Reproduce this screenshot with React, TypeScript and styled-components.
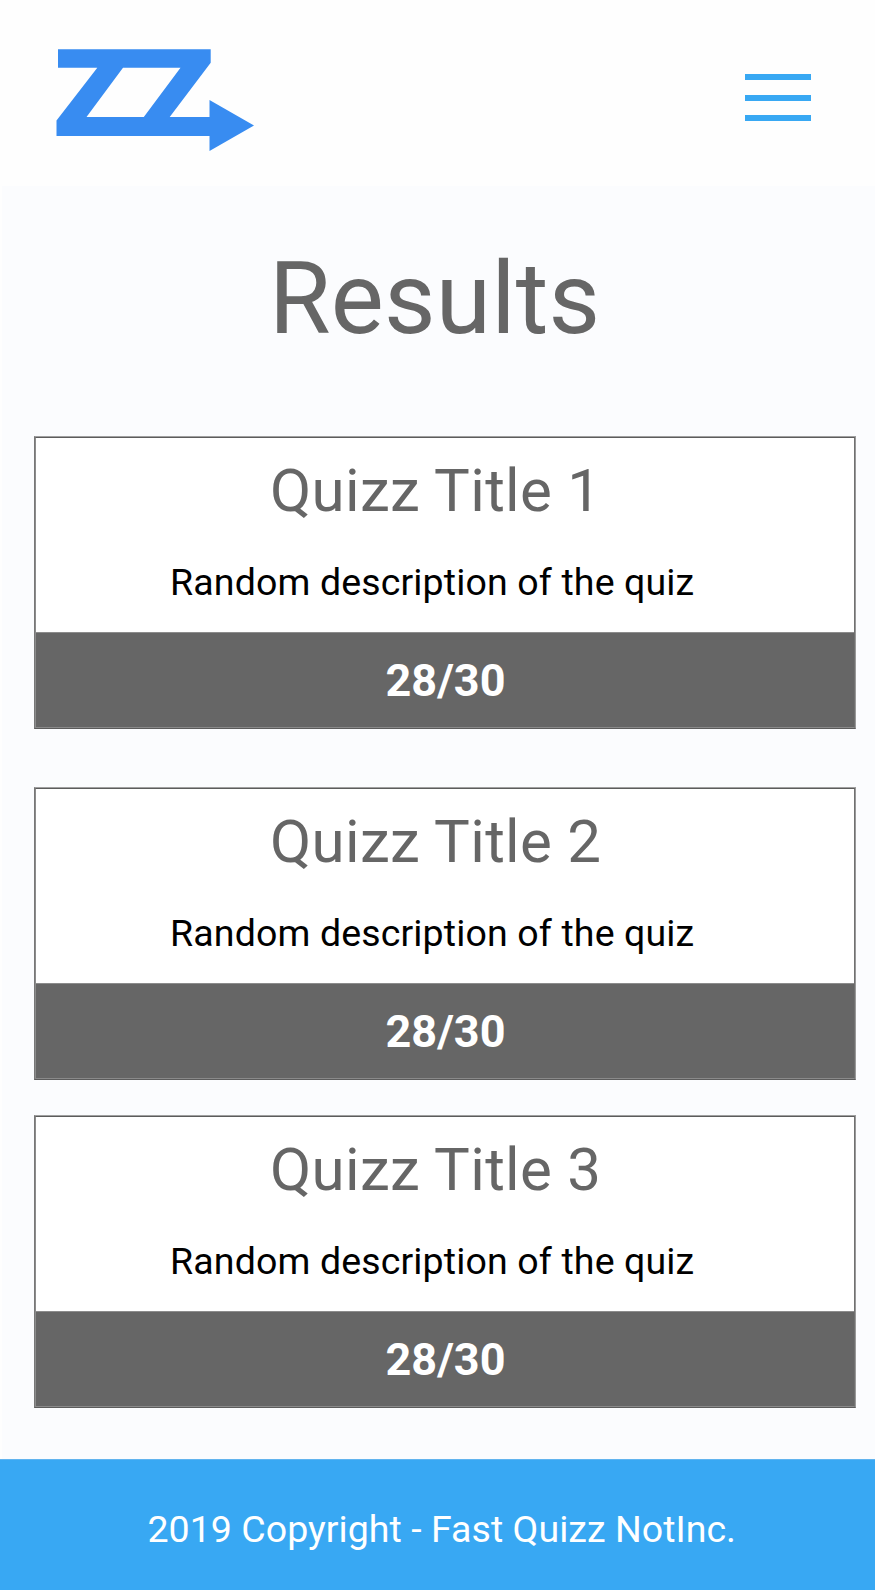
import React from "react";
import styled, { createGlobalStyle } from "styled-components";

const GlobalStyle = createGlobalStyle`
  * { box-sizing: border-box; }
  body { margin: 0; background: #fefefe; font-family: Roboto, sans-serif; }
  h1, h2, p { margin: 0; font-weight: 400; white-space: nowrap; }
`;

const Page = styled.div`
  width: 875px;
  height: 1590px;
  display: flex;
  flex-direction: column;
`;

const Header = styled.header`
  height: 186px;
  display: flex;
  justify-content: space-between;
  align-items: flex-start;
  padding: 48px 63px 0 55px;
  background: #fefefe;
`;

const MenuButton = styled.button`
  width: 67px;
  margin-top: 26px;
  padding: 0;
  border: 0;
  background: none;
  display: grid;
  grid-template-rows: 6px 6px 6px;
  row-gap: 14.5px;
`;

const MenuLine = styled.span`
  background: #38a8f3;
  width: 66.3px;
`;

const Main = styled.main`
  height: 1273px;
  margin-left: 2px;
  padding: 0 19px 0 32px;
  background: #fbfcfe;
`;

const Heading = styled.h1`
  height: 250px;
  padding: 54px 0 0 235px;
  font-size: 100px;
  line-height: 117px;
  letter-spacing: 0.2px;
  color: #666;
`;

const Card = styled.article<{ $gap: number }>`
  height: 293px;
  margin-bottom: ${(p) => p.$gap}px;
  border: 1px solid;
  border-color: #a0a0a0 #999 #5c5c5c #777;
`;

const CardBody = styled.div`
  height: 100%;
  display: flex;
  flex-direction: column;
  border: 1px solid;
  border-color: #5c5c5c #707070 #8a8a8a #8c8c8c;
  background: #fff;
`;

const Title = styled.h2`
  padding: 18px 0 0 234px;
  font-size: 60px;
  line-height: 70px;
  letter-spacing: 0.32px;
  color: #666;
`;

const Description = styled.p`
  padding: 34px 0 0 134px;
  font-size: 37.5px;
  line-height: 44px;
  letter-spacing: 0.14px;
  color: #000;
`;

const Score = styled.div`
  height: 95px;
  margin-top: auto;
  padding: 21px 0 0 349.5px;
  border-top: 1px solid #8c8c8c;
  background: #666;
  color: #fff;
  font-size: 45px;
  font-weight: 700;
  line-height: 53px;
`;

const Footer = styled.footer`
  height: 131px;
  padding: 47px 0 0 147.5px;
  border-top: 1px solid #60b4ef;
  background: #38a8f3;
  color: #fff;
  font-size: 37.5px;
  line-height: 44px;
  letter-spacing: 0.04px;
  white-space: nowrap;
`;

const Logo = () => (
  <svg width="200" height="106" viewBox="55 48 200 106" fill="#388cf1" role="img" aria-label="Fast Quizz">
    <path
      fillRule="evenodd"
      d="M58 49.3H210.7V62.7L169.7 117H209.5V100L254 125.5L209.5 151V136H56.5V120.5L97.3 67.7H58ZM123 67.7L86.5 117H143.8L180.5 67.7Z"
    />
  </svg>
);

const quizzes = [
  { title: "Quizz Title 1", gap: 58 },
  { title: "Quizz Title 2", gap: 35 },
  { title: "Quizz Title 3", gap: 0 },
];

export default function App() {
  return (
    <Page>
      <GlobalStyle />
      <Header>
        <Logo />
        <MenuButton aria-label="Menu">
          <MenuLine />
          <MenuLine />
          <MenuLine />
        </MenuButton>
      </Header>
      <Main>
        <Heading>Results</Heading>
        {quizzes.map((quiz) => (
          <Card key={quiz.title} $gap={quiz.gap}>
            <CardBody>
              <Title>{quiz.title}</Title>
              <Description>Random description of the quiz</Description>
              <Score>28/30</Score>
            </CardBody>
          </Card>
        ))}
      </Main>
      <Footer>2019 Copyright - Fast Quizz NotInc.</Footer>
    </Page>
  );
}
